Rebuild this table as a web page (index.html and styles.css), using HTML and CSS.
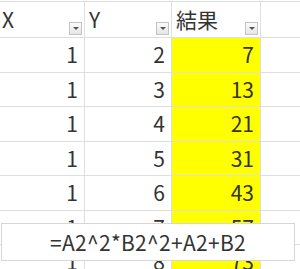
FILE: index.html
```
<!DOCTYPE html>
<html lang="ja">
<head>
    <meta charset="UTF-8">
    <meta name="viewport" content="width=device-width, initial-scale=1.0">
    <title>結果</title>
    <link rel="stylesheet" href="styles.css">
</head>
<body>
<div class="sheet">
    <div class="cell head">X<span class="filter"></span></div>
    <div class="cell head">Y<span class="filter"></span></div>
    <div class="cell head">結果<span class="filter"></span></div>
    <div class="cell blank"></div>

    <div class="cell num">1</div><div class="cell num">2</div><div class="cell num hit">7</div><div class="cell blank"></div>
    <div class="cell num">1</div><div class="cell num">3</div><div class="cell num hit">13</div><div class="cell blank"></div>
    <div class="cell num">1</div><div class="cell num">4</div><div class="cell num hit">21</div><div class="cell blank"></div>
    <div class="cell num">1</div><div class="cell num">5</div><div class="cell num hit">31</div><div class="cell blank"></div>
    <div class="cell num">1</div><div class="cell num">6</div><div class="cell num hit">43</div><div class="cell blank"></div>
    <div class="cell num">1</div><div class="cell num">7</div><div class="cell num hit">57</div><div class="cell blank"></div>
    <div class="cell num">1</div><div class="cell num">8</div><div class="cell num hit">73</div><div class="cell blank"></div>
</div>

<!-- 数式の吹き出し -->
<div class="formula">=A2^2*B2^2+A2+B2</div>
</body>
</html>
```

FILE: styles.css
```
body {
    margin: 0;
    background-color: #fff;
    font-family: "Noto Sans CJK JP", "Noto Sans", sans-serif;
    color: #333;
    overflow: hidden;
}

.sheet {
    display: grid;
    grid-template-columns: 85px 87px 89px 1fr;
    grid-template-rows: 36px;
    grid-auto-rows: 34.5px;
    margin-top: 1px;
    border-top: 1px solid #dedede;
}

.cell {
    box-sizing: border-box;
    border-right: 1px solid #dedede;
    border-bottom: 1px solid #dedede;
    font-size: 21px;
    line-height: 1;
    display: flex;
    align-items: center;
}

.head {
    justify-content: space-between;
    padding-left: 2px;
    padding-right: 2px;
}
.head:nth-child(2) { padding-left: 4px; }
.head:nth-child(3) { padding-left: 4px; }

.filter {
    width: 13px;
    height: 13px;
    box-sizing: border-box;
    border: 1px solid #c4c4c4;
    background: linear-gradient(#fbfbfb, #e6e6e6);
    align-self: flex-end;
    margin-bottom: 2px;
    display: flex;
    justify-content: center;
    align-items: center;
}
.filter::after {
    content: "";
    border-left: 3px solid transparent;
    border-right: 3px solid transparent;
    border-top: 3px solid #555;
}

.num {
    justify-content: flex-end;
    padding-right: 6px;
}

.hit {
    background-color: #ffff00;
}

.blank {
    border-right: none;
}

.formula {
    position: absolute;
    left: 1px;
    top: 223px;
    width: 294px;
    height: 38px;
    box-sizing: border-box;
    border: 1px solid #d6d6d6;
    background-color: #fff;
    font-size: 21px;
    letter-spacing: 0.3px;
    line-height: 36px;
    text-align: center;
    color: #333;
}
```
